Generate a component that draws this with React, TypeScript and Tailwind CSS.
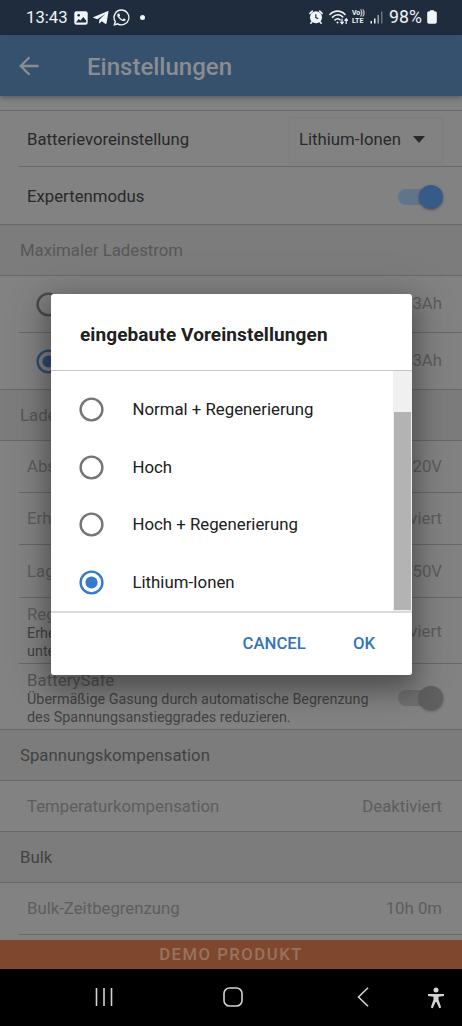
import type { ReactNode } from 'react';
import clsx from 'clsx';

interface RowProps {
  label: string;
  value?: string;
  height: string;
  lastInSection?: boolean;
}

const presets = [
  { label: 'Normal + Regenerierung' },
  { label: 'Hoch' },
  { label: 'Hoch + Regenerierung' },
  { label: 'Lithium-Ionen', selected: true },
];

function StatusBar() {
  return (
    <div className="flex h-[35px] shrink-0 items-center bg-[#1f2c3d] pl-[26px] pr-[25px] text-[#f1f4f8]">
      <span className="w-[48px] pt-[2px] text-[16.7px] leading-none">13:43</span>
      <svg className="h-[14px] w-[14px]" viewBox="0 0 14 14">
        <rect x="0.3" y="0.3" width="13.4" height="13.4" rx="2.2" fill="currentColor" />
        <circle cx="4.7" cy="4.3" r="1.3" fill="#1f2c3d" />
        <path d="M1.8 11.5 L4.8 8 L6.4 9.4 L9.3 6 L12.2 9.6 V11.5 Z" fill="#1f2c3d" />
      </svg>
      <svg className="ml-[5px] h-[15px] w-[16px]" viewBox="0 0 16 15">
        <path d="M15.6 0.8 L0.7 7 C0 7.4 0.2 7.9 0.8 8.1 L4.4 9.2 L12.2 4 L6.3 9.8 L6 13.4 C6.5 13.4 6.8 13.2 7.1 12.8 L8.8 11.2 L12.2 13.8 C12.9 14.2 13.4 13.9 13.6 13.1 Z" fill="currentColor" />
      </svg>
      <svg className="ml-[4px] h-[17px] w-[17px]" viewBox="0 0 24 24" fill="currentColor">
        <path d="M17.5 14.4c-.3-.2-1.8-.9-2-1-.3-.1-.5-.1-.7.2l-.9 1.1c-.2.2-.4.2-.7.1-1.9-.9-3.3-2.1-4.2-3.8-.2-.3 0-.5.1-.6l.8-.9c.1-.2.1-.4 0-.6L9 6.8c-.2-.6-.5-.5-.7-.5h-.6c-.9.1-1.7 1.2-1.7 2.5 0 1.4 1 2.8 1.2 3 1.7 2.6 4 4.4 7 5.2 1.5.4 3.1-.4 3.5-1.1.3-.6.3-1.4-.2-1.5Z" />
        <path fillRule="evenodd" d="M12 .4A11.5 11.5 0 0 0 2.2 17.8L.5 23.7l6-1.6A11.5 11.5 0 1 0 12 .4Zm0 2.1a9.5 9.5 0 1 1-5.2 17.4l-3.4.9.9-3.3A9.5 9.5 0 0 1 12 2.5Z" />
      </svg>
      <span className="ml-[10px] h-[5px] w-[5px] rounded-full bg-current" />
      <div className="ml-auto flex items-center">
        <svg className="h-[14px] w-[14px]" viewBox="0 0 14 14">
          <circle cx="7" cy="7.2" r="6" fill="currentColor" />
          <path d="M0.9 3.4 L3.3 1.1 M13.1 3.4 L10.7 1.1 M3 11.8 L1.8 13.2 M11 11.8 L12.2 13.2" stroke="currentColor" strokeWidth="1.6" strokeLinecap="round" />
          <path d="M6.8 4.3 V7.6 L9.3 8.8" fill="none" stroke="#1f2c3d" strokeWidth="1.2" />
        </svg>
        <svg className="ml-[6px] h-[15px] w-[20px]" viewBox="0 0 20 15" fill="none" stroke="currentColor" strokeLinecap="round">
          <path d="M1 4.5 C5 0 12 0 16 4.5" strokeWidth="1.6" />
          <path d="M3.5 7.3 C6.5 4 11 4 13.8 7" strokeWidth="1.6" />
          <path d="M6 10 C7.5 8.3 9.5 8.3 11 9.8" strokeWidth="1.6" />
          <circle cx="8.5" cy="12.4" r="1" fill="currentColor" stroke="none" />
          <path d="M13 9 V13.5 M11.7 12.2 L13 13.8 L14.3 12.2 M17.2 13.5 V9 M15.9 10.3 L17.2 8.7 L18.5 10.3" strokeWidth="1.2" />
        </svg>
        <div className="ml-[3px] flex w-[14px] flex-col text-[7px] font-bold leading-[8px]">
          <span className="whitespace-nowrap tracking-[-0.2px]">Vo))</span>
          <span className="tracking-[0.1px]">LTE</span>
        </div>
        <svg className="ml-[4px] h-[13px] w-[13px]" viewBox="0 0 13 13" fill="currentColor">
          <rect x="0.5" y="10" width="1.5" height="2.5" />
          <rect x="4" y="7.5" width="1.5" height="5" />
          <rect x="7.5" y="4" width="1.5" height="8.5" opacity="0.6" />
          <rect x="11" y="0.5" width="1.5" height="12" opacity="0.35" />
        </svg>
        <span className="ml-[6px] w-[38px] whitespace-nowrap pt-px text-[17.7px] leading-none">98%</span>
        <svg className="h-[14px] w-[10px]" viewBox="0 0 10 14" fill="currentColor">
          <path d="M3 0.3 H7 V1.2 H8 Q9.8 1.2 9.8 3 V12 Q9.8 13.8 8 13.8 H2 Q0.2 13.8 0.2 12 V3 Q0.2 1.2 2 1.2 H3 Z" />
        </svg>
      </div>
    </div>
  );
}

function AppBar() {
  return (
    <div className="relative flex h-[61px] shrink-0 items-center bg-[#36516e] pl-[19px] text-[#8a8d91] shadow-[0_2px_5px_rgba(0,0,0,0.3)]">
      <svg className="mt-px h-[20px] w-[20px]" viewBox="0 0 20 20" fill="none" stroke="currentColor" strokeWidth="2.3">
        <path d="M19.5 10 H2.5 M10.5 1.2 L1.7 10 L10.5 18.8" />
      </svg>
      <h1 className="ml-[48px] pt-[2px] text-[24px] font-medium leading-none">Einstellungen</h1>
    </div>
  );
}

function Line({ inset = false }: { inset?: boolean }) {
  return <div className={clsx('h-px shrink-0 bg-[#686868]', inset && 'ml-[19px]')} />;
}

function SectionHeader({ title, muted = false }: { title: string; muted?: boolean }) {
  return (
    <>
      <div
        className={clsx(
          'flex h-[50px] shrink-0 items-center bg-[#7c7c7c] pl-[20px] pt-px text-[16.75px]',
          muted ? 'text-[#575757]' : 'text-[#424242]'
        )}
      >
        {title}
      </div>
      <Line />
    </>
  );
}

function SettingRow({ label, value, height, lastInSection }: RowProps) {
  return (
    <>
      <div className={clsx('flex shrink-0 items-center justify-between pl-[27px] pr-[20px] pt-px text-[16.75px] text-[#5d5d5d]', height)}>
        <span>{label}</span>
        <span>{value}</span>
      </div>
      <Line inset={!lastInSection} />
    </>
  );
}

function Switch({ on = false }: { on?: boolean }) {
  return (
    <div className={clsx('flex h-[16px] w-[45px] items-center justify-end rounded-full', on ? 'bg-[#60748a]' : 'bg-[#707070]')}>
      <span className={clsx('h-[24px] w-[24px] rounded-full shadow-[0_1px_3px_rgba(0,0,0,0.35)]', on ? 'bg-[#365b86]' : 'bg-[#606060]')} />
    </div>
  );
}

function Radio({ selected = false, dimmed = false }: { selected?: boolean; dimmed?: boolean }) {
  return (
    <svg
      className={clsx(
        'h-[25px] w-[25px] shrink-0',
        dimmed
          ? selected ? 'text-[#2f4d70]' : 'text-[#4b4b4b]'
          : selected ? 'text-[#377bc8]' : 'text-[#757575]'
      )}
      viewBox="0 0 25 25"
    >
      <circle cx="12.5" cy="12.5" r="10.9" fill="none" stroke="currentColor" strokeWidth="2.4" />
      {selected && <circle cx="12.5" cy="12.5" r="6.1" fill="currentColor" />}
    </svg>
  );
}

function CurrentRow({ children }: { children: ReactNode }) {
  return (
    <div className="flex h-[56px] shrink-0 items-center justify-between pl-[36px] pr-[20px] text-[16.75px] text-[#5d5d5d]">
      {children}
      <span>3Ah</span>
    </div>
  );
}

function PresetDialog() {
  return (
    <div className="absolute left-[51px] top-[294px] flex h-[381px] w-[361px] flex-col overflow-hidden rounded-[3px] bg-white text-[#202020]">
      <h2 className="flex h-[76px] shrink-0 items-center pl-[29px] pt-[6px] text-[19px] font-bold tracking-[0.1px]">
        eingebaute Voreinstellungen
      </h2>
      <div className="h-px shrink-0 bg-[#c6c6c6]" />
      <div className="flex h-[240px] shrink-0">
        <div className="flex flex-1 flex-col pt-[9.6px]">
          {presets.map((preset) => (
            <div key={preset.label} className="flex h-[57.7px] shrink-0 items-center pl-[28px]">
              <Radio selected={preset.selected} />
              <span className="ml-[28.5px] text-[16.8px]">{preset.label}</span>
            </div>
          ))}
        </div>
        <div className="flex w-[19px] flex-col bg-[#f0f0f0] pl-px pr-px pt-[41px]">
          <div className="h-[198px] bg-[#b3b3b3]" />
        </div>
      </div>
      <div className="h-[2px] shrink-0 bg-[#dadada]" />
      <div className="flex flex-1 items-center justify-end pr-[37px] text-[16.75px] font-medium text-[#3474b9]">
        <button>CANCEL</button>
        <button className="ml-[47px]">OK</button>
      </div>
    </div>
  );
}

function NavigationBar() {
  return (
    <div className="flex h-[57px] shrink-0 items-center bg-black pb-px pl-[94px] pr-[17px] text-[#d2d2d2]">
      <svg className="h-[20px] w-[20px]" viewBox="0 0 20 20" stroke="currentColor" strokeWidth="1.6">
        <path d="M2.5 1 V19 M10 1 V19 M17.5 1 V19" />
      </svg>
      <svg className="ml-[109px] h-[20px] w-[20px]" viewBox="0 0 20 20" fill="none" stroke="currentColor" strokeWidth="1.6">
        <rect x="1" y="1" width="18" height="18" rx="5.5" />
      </svg>
      <svg className="ml-[114px] h-[20px] w-[12px]" viewBox="0 0 12 20" fill="none" stroke="currentColor" strokeWidth="1.6">
        <path d="M11 0.8 L1.5 10 L11 19.2" />
      </svg>
      <svg className="ml-auto mt-[2px] h-[22px] w-[18px]" viewBox="0 0 18 22" fill="currentColor">
        <circle cx="9" cy="3" r="2.5" />
        <path d="M1 7 H17 V9 L11.5 9.7 V12.5 L14.2 20.5 L12.2 21.2 L9.4 15 H8.6 L5.8 21.2 L3.8 20.5 L6.5 12.5 V9.7 L1 9 Z" />
      </svg>
    </div>
  );
}

export default function App() {
  return (
    <div className="relative flex h-[1026px] w-[462px] flex-col overflow-hidden bg-[#828282] font-['Roboto',sans-serif]">
      <StatusBar />
      <AppBar />
      <div className="h-[14px] shrink-0" />
      <Line />

      <div className="flex h-[55px] shrink-0 items-center justify-between pl-[27px] pr-[19px] pt-[2px] text-[16.75px] text-[#292929]">
        <span>Batterievoreinstellung</span>
        <div className="flex h-[46px] w-[154px] items-center rounded-[3px] border border-[#7d7d7d] pl-[9px]">
          <span>Lithium-Ionen</span>
          <svg className="ml-[12px] h-[7px] w-[12px]" viewBox="0 0 12 7" fill="currentColor">
            <path d="M0 0 H12 L6 7 Z" />
          </svg>
        </div>
      </div>
      <Line inset />
      <div className="flex h-[57px] shrink-0 items-center justify-between pl-[27px] pr-[19px] pt-[2px] text-[16.75px] text-[#292929]">
        <span className="pt-px">Expertenmodus</span>
        <Switch on />
      </div>
      <Line />

      <SectionHeader title="Maximaler Ladestrom" muted />
      <CurrentRow>
        <Radio dimmed />
      </CurrentRow>
      <Line inset />
      <CurrentRow>
        <Radio dimmed selected />
      </CurrentRow>
      <Line />

      <SectionHeader title="Lade" muted />
      <SettingRow label="Abs" value="20V" height="h-[51px]" />
      <SettingRow label="Erh" value="viert" height="h-[51px]" />
      <SettingRow label="Lag" value="50V" height="h-[52px]" />
      <div className="flex h-[65px] shrink-0 items-center justify-between pl-[27px] pr-[20px] pt-[3px] text-[16.75px] text-[#5d5d5d]">
        <div className="flex flex-col">
          <span className="leading-[21px]">Reg</span>
          <span className="text-[14.4px] leading-[18px] text-[#424242]">Erhe</span>
          <span className="text-[14.4px] leading-[18px] text-[#424242]">unte</span>
        </div>
        <span>viert</span>
      </div>
      <Line inset />
      <div className="flex h-[65px] shrink-0 items-center justify-between pl-[27px] pr-[19px] pt-[3px]">
        <div className="flex flex-col">
          <span className="text-[16.75px] leading-[21px] tracking-[0.05px] text-[#555555]">BatterySafe</span>
          <p className="whitespace-nowrap text-[14.4px] leading-[18px] text-[#424242]">
            Übermäßige Gasung durch automatische Begrenzung
            <br />
            des Spannungsanstieggrades reduzieren.
          </p>
        </div>
        <Switch />
      </div>
      <Line />

      <SectionHeader title="Spannungskompensation" />
      <SettingRow label="Temperaturkompensation" value="Deaktiviert" height="h-[50px]" lastInSection />
      <SectionHeader title="Bulk" />
      <SettingRow label="Bulk-Zeitbegrenzung" value="10h 0m" height="h-[51px]" />
      <div className="h-[5px] shrink-0" />

      <div className="flex h-[29px] shrink-0 items-center justify-center bg-[#7f482e] text-[16.7px] font-medium tracking-[1.5px] text-[#97735f]">
        DEMO PRODUKT
      </div>
      <NavigationBar />

      {/* Soft shadow under the dialog */}
      <div className="absolute left-[51px] top-[294px] h-[381px] w-[361px] rounded-[3px] shadow-[0_12px_24px_4px_rgba(0,0,0,0.3),0_4px_44px_8px_rgba(0,0,0,0.12)]" />
      <PresetDialog />
    </div>
  );
}
